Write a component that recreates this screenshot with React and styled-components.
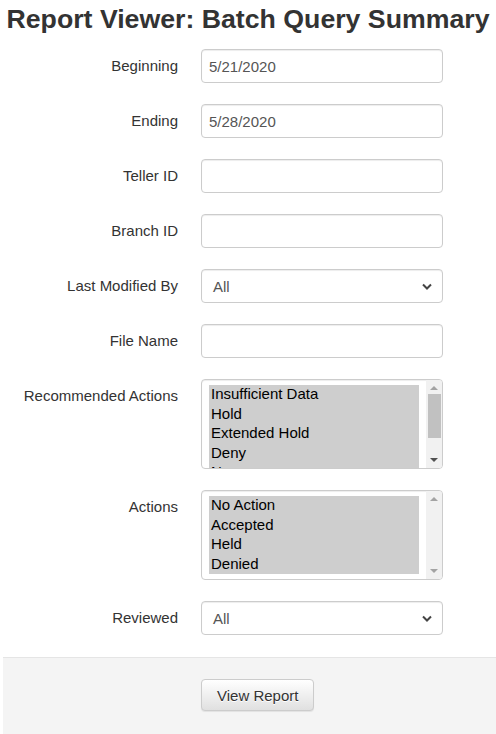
import React from 'react';
import styled, { createGlobalStyle } from 'styled-components';

const GlobalStyle = createGlobalStyle`
  html, body {
    margin: 0;
    padding: 0;
    background: #fff;
  }
  body {
    font-family: "Liberation Sans", Arial, sans-serif;
    font-size: 15px;
    color: #333;
  }
`;

const Page = styled.div`
  width: 496px;
  min-height: 734px;
  display: flex;
  flex-direction: column;
`;

const Title = styled.h2`
  margin: 0;
  padding-top: 4px;
  height: 49px;
  box-sizing: border-box;
  font-size: 26.7px;
  line-height: 30px;
  font-weight: bold;
  text-align: center;
  white-space: nowrap;
  color: #333;
`;

const Form = styled.form`
  display: grid;
  grid-template-columns: 178px 242px;
  column-gap: 23px;
  row-gap: 21px;
  align-items: start;
`;

const Label = styled.label`
  text-align: right;
  padding-top: 7px;
  line-height: 20px;
  font-size: 15px;
  color: #333;
`;

const Input = styled.input`
  box-sizing: border-box;
  width: 242px;
  height: 34px;
  margin: 0;
  padding: 6px 7px;
  border: 1px solid #ccc;
  border-radius: 4px;
  box-shadow: inset 0 1px 1px rgba(0, 0, 0, 0.075);
  font-family: "Liberation Sans", Arial, sans-serif;
  font-size: 15px;
  color: #555;
  background: #fff;
  outline: none;
`;

const SelectBox = styled.div`
  box-sizing: border-box;
  width: 242px;
  height: 34px;
  padding: 0 10px 0 11px;
  border: 1px solid #ccc;
  border-radius: 4px;
  box-shadow: inset 0 1px 1px rgba(0, 0, 0, 0.075);
  display: flex;
  align-items: center;
  justify-content: space-between;
  font-size: 15px;
  color: #555;
`;

const ListBox = styled.div`
  box-sizing: border-box;
  width: 242px;
  height: 90px;
  border: 1px solid #ccc;
  border-radius: 4px;
  box-shadow: inset 0 1px 1px rgba(0, 0, 0, 0.075);
  display: flex;
  overflow: hidden;
`;

const Options = styled.div`
  flex: 1;
  padding: 5px 7px 0 7px;
  overflow: hidden;
`;

const Option = styled.div`
  height: 19.5px;
  box-sizing: border-box;
  line-height: 18px;
  padding: 0 2px 1.5px;
  background: #cecece;
  color: #000;
  font-size: 15px;
  white-space: nowrap;
`;

const Scrollbar = styled.div`
  width: 16px;
  background: #f1f1f1;
  display: flex;
  flex-direction: column;
  align-items: center;
  justify-content: space-between;
  padding: 6px 0;
  box-sizing: border-box;
`;

const Arrow = styled.div`
  width: 0;
  height: 0;
  border-left: 4px solid transparent;
  border-right: 4px solid transparent;
  ${(p) =>
    p.$down
      ? `border-top: 4px solid ${p.$dark ? '#505050' : '#a3a3a3'};`
      : `border-bottom: 4px solid ${p.$dark ? '#505050' : '#a3a3a3'};`}
`;

const Track = styled.div`
  flex: 1;
  width: 100%;
  display: flex;
  justify-content: center;
  padding: 4px 0;
`;

const Thumb = styled.div`
  width: 13px;
  height: 44px;
  background: #c1c1c1;
`;

const Footer = styled.div`
  margin-top: 22px;
  margin-left: 3px;
  flex: 1;
  background: #f4f4f4;
  border-top: 1px solid #e5e5e5;
  padding: 21px 0 23px 198px;
`;

const Button = styled.button`
  box-sizing: border-box;
  height: 32px;
  padding: 0 15px;
  font-family: "Liberation Sans", Arial, sans-serif;
  font-size: 15px;
  color: #333;
  border: 1px solid #ccc;
  border-radius: 4px;
  background-image: linear-gradient(to bottom, #fff 0, #e0e0e0 100%);
  text-shadow: 0 1px 0 #fff;
  box-shadow: inset 0 1px 0 rgba(255, 255, 255, 0.15), 0 1px 1px rgba(0, 0, 0, 0.075);
`;

const Chevron = () => (
  <svg width="10" height="7" viewBox="0 0 10 7">
    <path d="M1 1.5 L5 5.5 L9 1.5" fill="none" stroke="#444" strokeWidth="2" />
  </svg>
);

const Select = ({ value }) => (
  <SelectBox>
    <span>{value}</span>
    <Chevron />
  </SelectBox>
);

const MultiSelect = ({ items, scrollable }) => (
  <ListBox>
    <Options>
      {items.map((item) => (
        <Option key={item}>{item}</Option>
      ))}
    </Options>
    <Scrollbar>
      <Arrow />
      <Track>{scrollable && <Thumb />}</Track>
      <Arrow $down $dark={scrollable} />
    </Scrollbar>
  </ListBox>
);

const App = () => {
  return (
    <Page>
      <GlobalStyle />
      <Title>Report Viewer: Batch Query Summary</Title>
      <Form>
        <Label>Beginning</Label>
        <Input defaultValue="5/21/2020" />
        <Label>Ending</Label>
        <Input defaultValue="5/28/2020" />
        <Label>Teller ID</Label>
        <Input />
        <Label>Branch ID</Label>
        <Input />
        <Label>Last Modified By</Label>
        <Select value="All" />
        <Label>File Name</Label>
        <Input />
        <Label>Recommended Actions</Label>
        <MultiSelect
          scrollable
          items={['Insufficient Data', 'Hold', 'Extended Hold', 'Deny', 'None']}
        />
        <Label>Actions</Label>
        <MultiSelect items={['No Action', 'Accepted', 'Held', 'Denied']} />
        <Label>Reviewed</Label>
        <Select value="All" />
      </Form>
      <Footer>
        <Button type="button">View Report</Button>
      </Footer>
    </Page>
  );
};

export default App;
